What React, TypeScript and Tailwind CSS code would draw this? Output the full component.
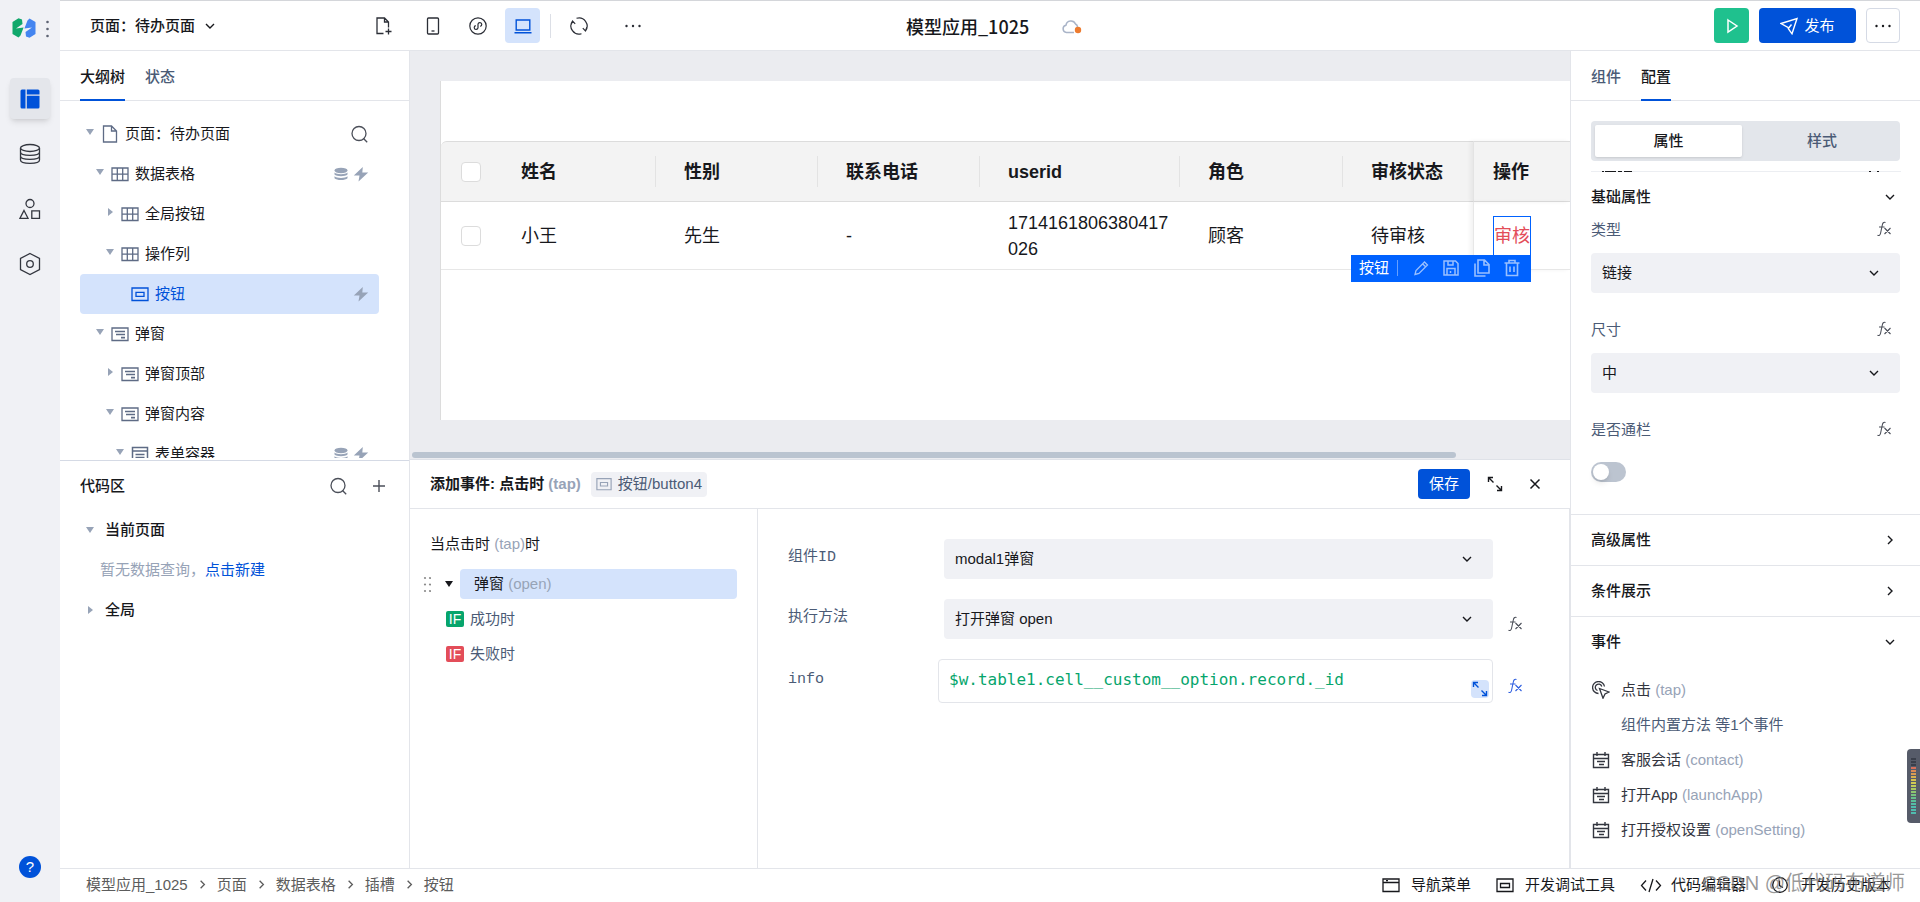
import { useState, ReactNode } from 'react';
import clsx from 'clsx';

type IconProps = { className?: string };

const Svg = ({ className, box = 18, children }: IconProps & { box?: number; children: ReactNode }) => (
  <svg
    viewBox={`0 0 ${box} ${box}`}
    className={clsx('shrink-0', className)}
    fill="none"
    stroke="currentColor"
    strokeWidth="1.3"
    aria-hidden="true"
  >
    {children}
  </svg>
);

const ChevronDown = ({ className = 'size-4' }: IconProps) => (
  <Svg box={16} className={className}><path d="M4 6l4 4 4-4" strokeWidth="1.4" /></Svg>
);

const ChevronRight = ({ className = 'size-4' }: IconProps) => (
  <Svg box={16} className={className}><path d="M6 4l4 4-4 4" strokeWidth="1.4" /></Svg>
);

const Caret = ({ open, className }: IconProps & { open: boolean }) => (
  <svg viewBox="0 0 8 8" className={clsx('size-2 shrink-0', className)} fill="currentColor" aria-hidden="true">
    {open ? <path d="M0 1h8L4 7z" /> : <path d="M2 0v8l5-4z" />}
  </svg>
);

const SearchIcon = () => (
  <Svg className="size-[18px]"><circle cx="8" cy="8.5" r="7" /><path d="M12.500 13.500l3.700 3.700" /></Svg>
);

const FileIcon = () => (
  <Svg className="size-[18px]"><path d="M2.500 1h8l5 5v11h-13zM10.500 1v5h5" /></Svg>
);

const GridIcon = () => (
  <Svg className="size-[18px]"><path d="M1 3h16v12.500H1zM1 9.200h16M6.300 3v12.500M11.700 3v12.500" /></Svg>
);

const DialogIcon = () => (
  <Svg className="size-[18px]"><path d="M1 3h16v12.500H1z" /><path d="M4 6.500h10M5 9.500h9M10 12.700h4" strokeWidth="1.700" /></Svg>
);

const ButtonIcon = ({ className = 'size-[18px]' }: IconProps) => (
  <Svg className={className}><path d="M1 3h16v12.500H1z" /><path d="M5 7.300h8v4H5z" /></Svg>
);

const FormIcon = () => (
  <Svg className="size-[18px]"><path d="M1.500 2.500h15v14h-15zM1.500 6h15M4.500 9.500h9M4.500 12.500h9" strokeWidth="1.5" /></Svg>
);

const BoltIcon = () => (
  <svg viewBox="0 0 16 16" className="size-4 shrink-0" fill="currentColor" aria-hidden="true">
    <path d="M9.800 1L.8 9.500h5.700L5.500 15.500l9.700-9H9.300z" />
  </svg>
);

const DbSolidIcon = () => (
  <svg viewBox="0 0 16 16" className="size-4 shrink-0" fill="currentColor" aria-hidden="true">
    <ellipse cx="8" cy="4.500" rx="6.500" ry="2.700" />
    <path d="M1.500 6.500c2 2.200 11 2.200 13 0v2c-2 2.300-11 2.300-13 0zM1.500 10.300c2 2.200 11 2.200 13 0v2c-2 2.400-11 2.400-13 0z" />
  </svg>
);

const ExpandIcon = ({ className = 'size-4' }: IconProps) => (
  <Svg box={16} className={className}>
    <path d="M1.500 6V1.500H6M1.500 1.500l5 5M14.500 10v4.500H10M14.500 14.500l-5-5" strokeWidth="1.400" />
  </Svg>
);

const FxIcon = ({ className = 'text-[#4b4f59]' }: IconProps) => (
  <Svg box={16} className={clsx('size-4', className)}>
    <path d="M9.500 1.500C7.500.8 6.700 2 6.300 4L4.500 12.500c-.4 1.800-1.500 2.300-3 1.700M3 6h5.500M8.500 7l6 6M14.500 7l-6 6" strokeWidth="1.100" />
  </Svg>
);

const EventIcon = () => (
  <Svg className="size-[18px]"><path d="M1.500 3.500h15v13h-15zM1.500 7.500h15M5 1v4M13 1v4M5 10.500h8M7 13.500h5" strokeWidth="1.400" /></Svg>
);

const TapIcon = () => (
  <Svg className="size-[18px]">
    <path d="M6.500 12.500A6 6 0 1 1 12.500 5.500M5.500 9.500A3.300 3.300 0 1 1 9.800 5.500" />
    <path d="M7.500 7.500l9.500 3.500-4 2-2 4.200z" />
  </Svg>
);

const MoreIcon = () => (
  <svg viewBox="0 0 18 18" className="size-[18px] shrink-0" fill="currentColor" aria-hidden="true">
    <circle cx="2.500" cy="9" r="1.200" /><circle cx="9" cy="9" r="1.200" /><circle cx="15.500" cy="9" r="1.200" />
  </svg>
);

const HistoryIcon = () => (
  <Svg className="size-[18px]"><circle cx="9" cy="9" r="7.300" /><path d="M8.500 4.500v5l3.500 2" /></Svg>
);

const Logo = () => (
  <svg viewBox="0 0 24 20" className="h-5 w-6 shrink-0" aria-hidden="true">
    <path d="M6.500.3L10 1.500 10.500 6 4 10.500 11.600 9.500 8.500 17.500 6.500 19.500.5 16V4z" fill="#10a86b" />
    <path d="M6.500.3L10 1.500 10.500 6 4 10.500 11.600 9.500 8.500 17.500 6.500 19.500.5 16V4z" fill="#4485f0" transform="rotate(180 12 10)" />
  </svg>
);

const treeIcons = { file: FileIcon, grid: GridIcon, dialog: DialogIcon, button: ButtonIcon, form: FormIcon };

type TreeNode = {
  label: string;
  icon: keyof typeof treeIcons;
  level: number;
  open?: boolean;
  data?: boolean;
  event?: boolean;
  active?: boolean;
};

const indents = ['pl-[6px]', 'pl-[16px]', 'pl-[26px]', 'pl-[36px]'];

const tree: TreeNode[] = [
  { label: '页面：待办页面', icon: 'file', level: 0, open: true },
  { label: '数据表格', icon: 'grid', level: 1, open: true, data: true, event: true },
  { label: '全局按钮', icon: 'grid', level: 2, open: false },
  { label: '操作列', icon: 'grid', level: 2, open: true },
  { label: '按钮', icon: 'button', level: 3, event: true, active: true },
  { label: '弹窗', icon: 'dialog', level: 1, open: true },
  { label: '弹窗顶部', icon: 'dialog', level: 2, open: false },
  { label: '弹窗内容', icon: 'dialog', level: 2, open: true },
  { label: '表单容器', icon: 'form', level: 3, open: true, data: true, event: true },
];

const columns = [
  { title: '姓名', value: '小王', width: 'w-[163px]' },
  { title: '性别', value: '先生', width: 'w-[162px]' },
  { title: '联系电话', value: '-', width: 'w-[162px]' },
  { title: 'userid', value: '1714161806380417026', width: 'w-[200px]' },
  { title: '角色', value: '顾客', width: 'w-[163px]' },
  { title: '审核状态', value: '待审核', width: 'w-[130px]' },
];

const events = [
  { name: '客服会话', code: 'contact' },
  { name: '打开App', code: 'launchApp' },
  { name: '打开授权设置', code: 'openSetting' },
];

const crumbs = ['模型应用_1025', '页面', '数据表格', '插槽', '按钮'];

const meterColors = [
  'bg-[#3a3f4b]', 'bg-[#3a3f4b]', 'bg-[#3a3f4b]', 'bg-[#d8705a]', 'bg-[#d98a55]', 'bg-[#d89b52]', 'bg-[#d6b04f]',
  'bg-[#d4c04f]', 'bg-[#cfc953]', 'bg-[#bfca58]', 'bg-[#a8c862]', 'bg-[#8fc56f]', 'bg-[#79c27e]', 'bg-[#66c08c]',
  'bg-[#5abf9a]', 'bg-[#54bda6]', 'bg-[#50bbae]', 'bg-[#50bbae]', 'bg-[#50bbae]',
];

function SideNav() {
  return (
    <nav className="flex w-[60px] shrink-0 flex-col items-center bg-[#f0f1f5] pb-6 text-[#33363f]">
      <div className="flex h-14 w-full items-end gap-[10px] pb-[18px] pl-3">
        <Logo />
        <svg viewBox="0 0 3 18" className="h-[18px] w-[3px]" fill="#5d6372" aria-hidden="true">
          <circle cx="1.500" cy="2" r="1.300" /><circle cx="1.500" cy="9" r="1.300" /><circle cx="1.500" cy="16" r="1.300" />
        </svg>
      </div>
      <div className="mt-[22px] flex flex-col gap-[14px]">
        <button aria-label="设计" className="flex h-[41px] w-10 items-center justify-center rounded bg-[#e4e6eb] text-[#0052d9] shadow-md">
          <svg viewBox="0 0 20 20" className="size-5" fill="currentColor" aria-hidden="true">
            <path d="M2 .5h3.500v19H2a1.500 1.500 0 0 1-1.500-1.500V2A1.500 1.500 0 0 1 2 .5zM6.800.5H18A1.500 1.500 0 0 1 19.500 2v3.500H6.800zM6.800 6.800h12.700V18a1.500 1.500 0 0 1-1.500 1.500H6.800z" />
          </svg>
        </button>
        <button aria-label="数据" className="flex h-[41px] w-10 items-center justify-center">
          <Svg box={22} className="size-[22px]">
            <ellipse cx="11" cy="5" rx="9.500" ry="3.500" />
            <path d="M1.500 5v12c0 4.500 19 4.500 19 0V5M1.500 9c0 4.500 19 4.500 19 0M1.500 13c0 4.500 19 4.500 19 0" />
          </Svg>
        </button>
        <button aria-label="素材" className="flex h-[41px] w-10 items-center justify-center">
          <Svg box={22} className="size-[22px]">
            <circle cx="11" cy="5.500" r="4" /><path d="M5 12.500L9 20.300H1zM12.800 12.800h7.700v7.500h-7.700z" />
          </Svg>
        </button>
        <button aria-label="设置" className="flex h-[41px] w-10 items-center justify-center">
          <Svg box={24} className="size-6"><path d="M12 1.500l9.500 5v11l-9.500 5-9.500-5v-11z" /><circle cx="12" cy="12" r="3.300" /></Svg>
        </button>
      </div>
      <button aria-label="帮助" className="mt-auto flex size-[22px] items-center justify-center rounded-full bg-[#0052d9] text-[15px] leading-5 text-white">?</button>
    </nav>
  );
}

function Header() {
  const tool = 'flex h-[35px] w-[35px] items-center justify-center rounded';
  return (
    <header className="flex h-[51px] shrink-0 items-center border-t border-b border-t-[#d4d6da] border-b-[#e3e5ea] bg-white pr-5">
      <button className="flex w-[276px] items-center gap-[7px] pl-[30px] font-medium">
        页面：待办页面<ChevronDown />
      </button>
      <div className="ml-[30px] flex items-center gap-[10px] text-[#2b2e36]">
        <button aria-label="新建页面" className={tool}>
          <Svg className="size-[18px]"><path d="M8.500 16.500H2V1h7.500l4 4v5.500M9.500 1v4h4M13.500 11.500v6M10.500 14.500h6" /></Svg>
        </button>
        <button aria-label="手机" className={clsx(tool, 'ml-1')}>
          <Svg className="size-[18px]"><rect x="3.500" y="1" width="11" height="16" rx="1" /><path d="M7.500 14h3" /></Svg>
        </button>
        <button aria-label="小程序" className={tool}>
          <Svg className="size-[18px]">
            <circle cx="9" cy="9" r="8.200" strokeWidth="1.200" />
            <path d="M6.800 8.700A1.900 1.900 0 1 0 9 10.900V7.100A1.900 1.900 0 1 1 11.200 9.300" strokeWidth="1.200" />
          </Svg>
        </button>
        <button aria-label="电脑" className={clsx(tool, 'bg-[#d4e3fc] text-[#0052d9]')}>
          <Svg className="size-[18px]"><path d="M2.200 3h13.600v10H2.200zM.5 15.800h17" strokeWidth="1.400" /></Svg>
        </button>
        <span className="h-6 w-px bg-[#dcdfe6]" />
        <button aria-label="刷新" className={tool}>
          <Svg className="size-[18px]">
            <path d="M6.500 1.300A8.100 8.100 0 0 1 15.500 13.800M11.500 16.700A8.100 8.100 0 0 1 2.500 4.200M12.800 11.200l2.600 2.700 1.400-3.500M5.200 6.800L2.600 4.100 1.200 7.600" strokeWidth="1.200" />
          </Svg>
        </button>
        <button aria-label="更多工具" className={clsx(tool, 'ml-[9px]')}><MoreIcon /></button>
      </div>
      <div className="flex flex-1 items-center pl-[256px]">
        <h1 className="font-['Noto_Sans_CJK_SC',sans-serif] text-lg leading-6 font-medium">模型应用_1025</h1>
        <svg viewBox="0 0 20 16" className="ml-[33px] h-4 w-5" fill="none" aria-hidden="true">
          <path d="M12 14.500H4.500A3.700 3.700 0 0 1 4 7.200 5 5 0 0 1 13.500 6c1.500.8 2 2 2 3" stroke="#a9b4c8" strokeWidth="1.500" />
          <circle cx="16" cy="12" r="3.200" fill="#ed7b2f" />
        </svg>
      </div>
      <div className="flex items-center gap-[10px]">
        <button aria-label="预览" className={clsx(tool, 'bg-[#1fc18e] text-white')}>
          <Svg className="size-[18px]"><path d="M5 3l9 6-9 6z" strokeWidth="1.500" /></Svg>
        </button>
        <button className="flex h-[35px] w-[97px] items-center justify-center gap-[6px] rounded bg-[#0052d9] text-white">
          <Svg className="size-[18px]"><path d="M17 1.500L12 16.800 8.500 12 8 10.500 1 6.500zM8.300 11.500L11.500 7.500" strokeWidth="1.400" /></Svg>
          发布
        </button>
        <button aria-label="更多" className="flex h-[35px] w-[34px] items-center justify-center rounded border border-[#d5dae5]"><MoreIcon /></button>
      </div>
    </header>
  );
}

function Tabs({ items, active, onChange }: { items: string[]; active: string; onChange: (v: string) => void }) {
  return (
    <div role="tablist" className="flex h-[50px] shrink-0 gap-5 border-b border-[#e3e5ea] px-5">
      {items.map(item => (
        <button
          key={item}
          role="tab"
          aria-selected={item === active}
          onClick={() => onChange(item)}
          className={clsx(
            '-mb-px border-b-2 pt-[3px] font-medium',
            item === active ? 'border-[#0052d9] text-[#17181c]' : 'border-transparent text-[#4b5b76]'
          )}
        >
          {item}
        </button>
      ))}
    </div>
  );
}

function OutlinePanel() {
  const [tab, setTab] = useState('大纲树');
  return (
    <aside className="flex w-[350px] shrink-0 flex-col border-r border-[#e3e5ea] bg-white">
      <Tabs items={['大纲树', '状态']} active={tab} onChange={setTab} />
      <div className="mb-[2px] min-h-0 flex-1 overflow-hidden pt-[13px] pr-[30px] pl-5">
        {tree.map(node => {
          const Icon = treeIcons[node.icon];
          return (
            <div
              key={node.label}
              className={clsx(
                'flex h-10 items-center rounded pr-[10px]',
                indents[node.level],
                node.active && 'bg-[#d4e3fc] text-[#0052d9]'
              )}
            >
              <span className="w-[15px] pb-1 text-[#97a3b7]">{node.open !== undefined && <Caret open={node.open} />}</span>
              <span className={node.active ? undefined : 'text-[#5e6b85]'}><Icon /></span>
              <span className="ml-[6px] flex-1">{node.label}</span>
              <span className="flex gap-1 text-[#97a3b7]">
                {node.level === 0 && <button aria-label="搜索" className="text-[#4b4f59]"><SearchIcon /></button>}
                {node.data && <DbSolidIcon />}
                {node.event && <BoltIcon />}
              </span>
            </div>
          );
        })}
      </div>
      <section className="h-[408px] shrink-0 border-t border-[#d5dae5]">
        <div className="flex h-[49px] items-center pr-[21px] pl-5 text-[#4b4f59]">
          <h2 className="flex-1 font-medium text-[#17181c]">代码区</h2>
          <button aria-label="搜索代码" className="mr-[22px]"><SearchIcon /></button>
          <button aria-label="新增"><Svg className="size-[18px]"><path d="M9 3v12M3 9h12" strokeWidth="1.400" /></Svg></button>
        </div>
        <div className="flex h-10 items-center gap-[11px] pl-[26px] font-medium">
          <Caret open className="text-[#97a3b7]" />当前页面
        </div>
        <div className="flex h-10 items-center pl-10 text-[#97a3b7]">
          暂无数据查询，<a href="#new" className="text-[#0052d9]">点击新建</a>
        </div>
        <div className="flex h-10 items-center gap-[11px] pl-[26px] font-medium">
          <Caret open={false} className="text-[#97a3b7]" />全局
        </div>
      </section>
    </aside>
  );
}

function SelectionToolbar() {
  return (
    <div className="absolute top-full -right-px flex h-[27px] w-[180px] items-center bg-[#0062ff] pr-[10px] pl-2 text-[15px] leading-5 text-white">
      按钮
      <span className="ml-2 h-4 w-px bg-white/40" />
      <span className="ml-[14px] flex flex-1 justify-between text-white/60">
        <Svg className="size-[18px]"><path d="M3 15.500l1-4L12.500 3l3 3L7 14.500zM10.800 5l3 3" /></Svg>
        <Svg className="size-[18px]"><path d="M2 2h11.500L16 4.500V16H2zM5 16V9.500h8V16M6 2v4h5V2M8.500 12v2" strokeWidth="1.500" /></Svg>
        <Svg className="size-[18px]"><path d="M5 1h6.500L16 5.500V14H5zM11 1v5h5M2 4.500V17h10.500" strokeWidth="1.600" /></Svg>
        <Svg className="size-[18px]"><path d="M1.500 4h15M6 4V1.500h6V4M3.500 4v12.500h11V4M7 7.500v5.500M11 7.500v5.500" strokeWidth="1.600" /></Svg>
      </span>
    </div>
  );
}

function Canvas() {
  const check = 'block size-5 appearance-none rounded border border-[#dcdcdc] bg-white';
  return (
    <div className="relative min-h-0 flex-1 overflow-hidden bg-[#ebecf0] pt-[30px] pb-[39px] pl-[30px]">
      <div className="h-full border-l border-[#dcdcdc] bg-white pt-[60px]">
        <table className="w-full table-fixed border-separate border-spacing-0 text-left text-lg leading-[26px] text-[#17181c]">
          <thead>
            <tr className="h-[61px] bg-[#f3f3f3]">
              <th className="w-[52px] rounded-tl-md border-y border-[#dcdcdc] pl-5">
                <input type="checkbox" aria-label="全选" className={check} />
              </th>
              {columns.map((col, i) => (
                <th key={col.title} className={clsx('border-y border-[#dcdcdc] p-0 font-bold', col.width)}>
                  <div className={clsx('flex h-[31px] items-center pl-7', i < 5 && 'border-r border-[#e3e3e3]')}>{col.title}</div>
                </th>
              ))}
              <th className="border-y border-l border-y-[#dcdcdc] border-l-[#e3e3e3] pl-[19px] font-bold shadow-[-3px_0_4px_rgba(0,0,0,0.05)]">操作</th>
            </tr>
          </thead>
          <tbody>
            <tr className="h-[68px]">
              <td className="border-b border-[#e7e7e7] pl-5">
                <input type="checkbox" aria-label="选择小王" className={check} />
              </td>
              {columns.map(col => (
                <td key={col.title} className="border-b border-[#e7e7e7] pr-2 pl-7 break-all">{col.value}</td>
              ))}
              <td className="border-b border-l border-[#e7e7e7] pl-[19px] shadow-[-3px_0_4px_rgba(0,0,0,0.05)]">
                <div className="relative flex h-10 w-[38px] items-center justify-center border border-[#0062ff]">
                  <button className="whitespace-nowrap text-[#e34d59]">审核</button>
                  <SelectionToolbar />
                </div>
              </td>
            </tr>
          </tbody>
        </table>
      </div>
      <div className="absolute bottom-px left-[2px] h-[6px] w-[90%] rounded-full bg-[#bac4d0]" />
    </div>
  );
}

function SelectBox({ id, value, className }: { id: string; value: string; className?: string }) {
  return (
    <div className={clsx('relative flex h-10 items-center', className)}>
      <select id={id} className="h-full w-full appearance-none rounded bg-[#f0f1f5] px-[11px] text-[#17181c]">
        <option>{value}</option>
      </select>
      <ChevronDown className="pointer-events-none absolute right-[18px] size-4" />
    </div>
  );
}

function EventEditor() {
  const [info, setInfo] = useState('$w.table1.cell__custom__option.record._id');
  const label = "w-[150px] shrink-0 pb-[3px] font-['Liberation_Mono','Noto_Sans_CJK_SC',monospace] text-[#4b5b76]";
  return (
    <section className="flex h-[409px] shrink-0 flex-col border-t border-[#dfe2e8] bg-white">
      <div className="flex h-[49px] shrink-0 items-center border-b border-[#e3e5ea] pr-[26px] pl-5">
        <h2 className="font-bold">添加事件: 点击时 <span className="text-[#97a3b7]">(tap)</span></h2>
        <span className="ml-[10px] flex h-[25px] items-center gap-[6px] rounded bg-[#f0f1f5] px-[5px] text-[#4b5b76]">
          <ButtonIcon className="size-4 text-[#97a3b7]" />按钮/button4
        </span>
        <button className="ml-auto h-[30px] rounded bg-[#0052d9] px-[11px] text-white">保存</button>
        <button aria-label="全屏" className="ml-[17px]"><ExpandIcon /></button>
        <button aria-label="关闭" className="ml-[23px]"><Svg className="size-[18px]"><path d="M4.500 4.500l9 9M13.500 4.500l-9 9" strokeWidth="1.500" /></Svg></button>
      </div>
      <div className="flex min-h-0 flex-1">
        <div className="w-[348px] shrink-0 border-r border-[#e3e5ea] pt-[25px] pr-5">
          <p className="pl-5">当点击时 <span className="text-[#97a3b7]">(tap)</span>时</p>
          <div className="mt-[15px] flex items-center pl-3">
            <svg viewBox="0 0 9 18" className="h-[18px] w-[9px]" fill="#8b8b8b" aria-hidden="true">
              {[3, 9.5, 16].map(y => [3, 8].map(x => <circle key={`${x}-${y}`} cx={x} cy={y} r="1.100" />))}
            </svg>
            <Caret open className="mx-[14px]" />
            <div className="-ml-[7px] h-[30px] flex-1 rounded bg-[#d4e3fc] pl-[14px] leading-[30px]">
              弹窗 <span className="text-[#97a3b7]">(open)</span>
            </div>
          </div>
          <div className="mt-[10px] flex flex-col gap-[15px] pl-9 text-[#4b5b76]">
            <div className="flex items-center gap-[6px]">
              <span className="flex h-4 w-[18px] items-center justify-center rounded-xs bg-[#06a56c] text-sm text-white">IF</span>成功时
            </div>
            <div className="flex items-center gap-[6px]">
              <span className="flex h-4 w-[18px] items-center justify-center rounded-xs bg-[#e34d59] text-sm text-white">IF</span>失败时
            </div>
          </div>
        </div>
        <div className="flex-1 border-r border-[#e3e5ea] pt-[30px] pr-[62px] pl-[30px]">
          <div className="flex items-center pr-[14px]">
            <label htmlFor="component" className={label}>组件ID</label>
            <SelectBox id="component" value="modal1弹窗" className="ml-[6px] flex-1" />
          </div>
          <div className="mt-5 flex items-center">
            <label htmlFor="method" className={label}>执行方法</label>
            <SelectBox id="method" value="打开弹窗 open" className="ml-[6px] flex-1" />
            <FxIcon className="mt-[10px] -mr-4 ml-[14px] text-[#4b4f59]" />
          </div>
          <div className="mt-5 flex items-center">
            <label htmlFor="info" className={label}>info</label>
            <div className="relative flex flex-1 items-center">
              <input
                id="info"
                value={info}
                onChange={e => setInfo(e.target.value)}
                className="h-11 w-full rounded border border-[#e3e5ea] px-[10px] pb-[3px] font-['DejaVu_Sans_Mono',monospace] text-base text-[#06a56c]"
              />
              <button aria-label="展开" className="absolute right-1 bottom-[5px] flex size-[18px] items-center justify-center rounded bg-[#d4e3fc] text-[#0052d9]"><ExpandIcon /></button>
            </div>
            <FxIcon className="mt-[10px] -mr-4 ml-[14px] text-[#2f5fe0]" />
          </div>
        </div>
      </div>
    </section>
  );
}

function FieldLabel({ id, children }: { id: string; children: ReactNode }) {
  return (
    <div className="flex h-5 items-start justify-between pr-2 font-['Liberation_Mono','Noto_Sans_CJK_SC',monospace] text-[#4b5b76]">
      <label htmlFor={id} className="leading-[26px]">{children}</label>
      <FxIcon className="mt-[2px] text-[#4b4f59]" />
    </div>
  );
}

function ConfigPanel() {
  const [tab, setTab] = useState('配置');
  return (
    <aside className="flex w-[350px] shrink-0 flex-col border-l border-[#e3e5ea] bg-white">
      <Tabs items={['组件', '配置']} active={tab} onChange={setTab} />
      <div className="mx-5 mt-5 flex h-10 shrink-0 rounded bg-[#e3e6eb] p-1 font-medium">
        <button className="w-[147px] rounded-xs bg-white shadow-sm">属性</button>
        <button className="flex-1 pl-[6px] text-[#4b5b76]">样式</button>
      </div>
      {/* bottom edge of the row scrolled out above the list */}
      <svg className="mx-5 mt-[10px] h-[2px] w-[310px] shrink-0" fill="#17181c" aria-hidden="true">
        <path d="M0 0h310v1H0z" fill="#eceef2" />
        <path d="M11 0h2v1h-2zM14 0h11v1h-11zM27 0h4v1h-4zM33 0h8v1h-8zM278 0h2v1h-2zM286 0h2v1h-2z" />
      </svg>
      <div className="flex min-h-0 flex-1 flex-col overflow-hidden px-5 pt-[14px]">
        <div className="flex items-center justify-between pr-[2px]"><h2 className="font-medium">基础属性</h2><ChevronDown /></div>
        <div className="mt-3"><FieldLabel id="type">类型</FieldLabel></div>
        <SelectBox id="type" value="链接" className="mt-[14px] shrink-0" />
        <div className="mt-[26px]"><FieldLabel id="size">尺寸</FieldLabel></div>
        <SelectBox id="size" value="中" className="mt-[14px] shrink-0" />
        <div className="mt-[26px]"><FieldLabel id="block">是否通栏</FieldLabel></div>
        <input
          id="block"
          type="checkbox"
          role="switch"
          className="mt-[23px] h-5 w-[35px] shrink-0 appearance-none rounded-full bg-[#bcc4d0] before:m-[2px] before:block before:size-4 before:rounded-full before:bg-white before:shadow-md checked:bg-[#0052d9] checked:before:ml-[17px]"
        />
        <button className="-mx-5 mt-8 flex h-[51px] shrink-0 items-center justify-between border-t border-[#e3e5ea] pr-[22px] pl-5 font-medium">高级属性<ChevronRight /></button>
        <button className="-mx-5 flex h-[51px] shrink-0 items-center justify-between border-t border-[#e3e5ea] pr-[22px] pl-5 font-medium">条件展示<ChevronRight /></button>
        <button className="-mx-5 flex h-[51px] shrink-0 items-center justify-between border-t border-[#e3e5ea] pr-[22px] pl-5 font-medium">事件<ChevronDown /></button>
        <ul className="mt-[5px] pl-px text-[#33363f]">
          <li className="flex h-[35px] items-center gap-[11px]">
            <TapIcon /><span>点击 <span className="text-[#97a3b7]">(tap)</span></span>
          </li>
          <li className="flex h-[35px] items-center pl-[29px] text-[#4b5b76]">组件内置方法 等1个事件</li>
          {events.map(event => (
            <li key={event.code} className="flex h-[35px] items-center gap-[11px]">
              <EventIcon /><span>{event.name} <span className="text-[#97a3b7]">({event.code})</span></span>
            </li>
          ))}
        </ul>
      </div>
    </aside>
  );
}

function Footer() {
  return (
    <footer className="relative flex h-[34px] shrink-0 items-center border-t border-[#e3e5ea] bg-white pr-[29px] pb-[2px] pl-[26px]">
      <nav className="flex items-center gap-[7px] text-[#5c5c5c]">
        {crumbs.map((crumb, i) => [
          i > 0 && <ChevronRight key={`${crumb}-sep`} className="size-[15px]" />,
          <a key={crumb} href="#crumb">{crumb}</a>,
        ])}
      </nav>
      <div className="ml-auto flex items-center gap-[25px] text-[#17181c]">
        <button className="flex items-center gap-[11px]">
          <Svg className="size-[18px]"><path d="M1 3h16v12.500H1zM1 6.500h16M4 4.700h2" strokeWidth="1.300" /></Svg>导航菜单
        </button>
        <button className="flex items-center gap-[11px]">
          <Svg className="size-[18px]"><path d="M1 3h16v12.500H1zM4.500 7.500h9v4h-9z" strokeWidth="1.300" /></Svg>开发调试工具
        </button>
        <button className="flex items-center gap-[9px]">
          <svg viewBox="0 0 22 18" className="h-[18px] w-[22px]" fill="none" stroke="currentColor" strokeWidth="1.300" aria-hidden="true">
            <path d="M6 4.500L1.500 9.500 6 14.500M16 4.500l4.500 5-4.500 5M13 3L9 16" />
          </svg>
          代码编辑器
        </button>
        <button className="flex items-center gap-3"><HistoryIcon />开发历史版本</button>
      </div>
      <span className="pointer-events-none absolute top-[2px] right-[15px] text-xl leading-6 text-[#777]/75">CSDN @低代码布道师</span>
    </footer>
  );
}

function LevelMeter() {
  return (
    <div className="fixed top-[749px] right-0 flex h-[74px] w-[13px] flex-col items-center justify-center gap-px rounded-l bg-[#565b69]">
      {meterColors.map((color, i) => <span key={i} className={clsx('h-[2px] w-[5px]', color)} />)}
    </div>
  );
}

export default function App() {
  return (
    <div className="flex h-screen overflow-hidden bg-white font-['Liberation_Sans','Noto_Sans_CJK_SC',sans-serif] text-[15px] leading-5 text-[#17181c]">
      <SideNav />
      <div className="flex min-w-0 flex-1 flex-col">
        <Header />
        <div className="flex min-h-0 flex-1">
          <OutlinePanel />
          <main className="flex min-w-0 flex-1 flex-col">
            <Canvas />
            <EventEditor />
          </main>
          <ConfigPanel />
        </div>
        <Footer />
      </div>
      <LevelMeter />
    </div>
  );
}
